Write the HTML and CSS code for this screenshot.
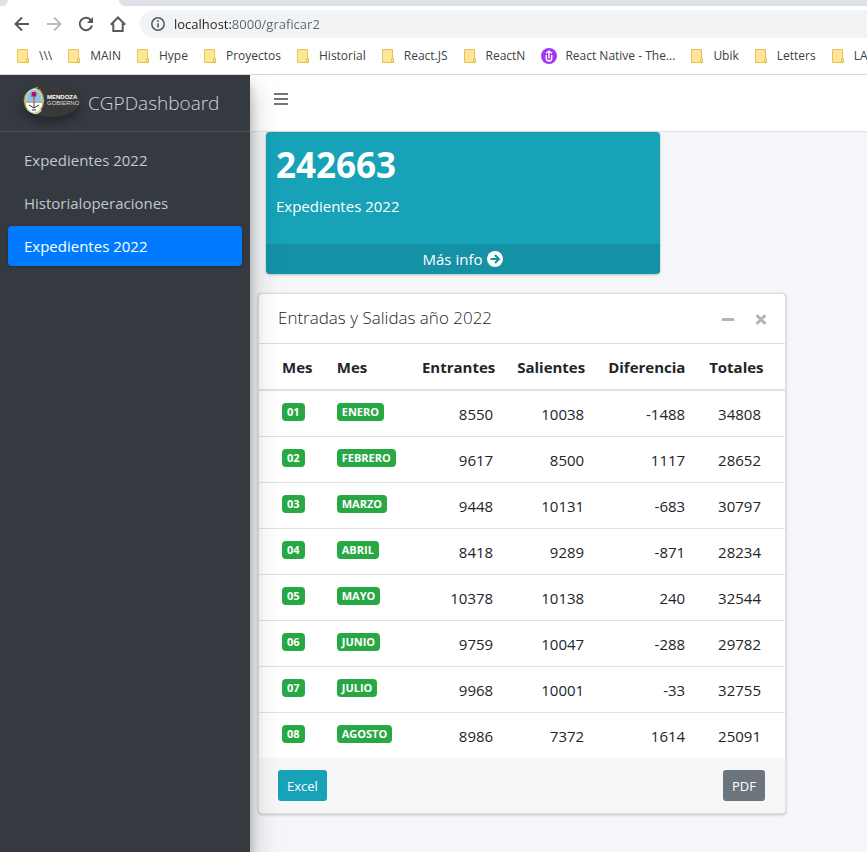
FILE: index.html
```html
<!DOCTYPE html>
<html lang="es">
<head>
<meta charset="utf-8">
<meta name="viewport" content="width=device-width, initial-scale=1">
<title>CGPDashboard</title>
<link rel="stylesheet" href="styles.css">
</head>
<body>
<svg class="defs" aria-hidden="true">
  <symbol id="folder" viewBox="0 0 12 14">
    <path d="M.5.5h10v8.8h1v4.2H.5z" fill="#ffe694" stroke="#e3c15a"/>
    <path d="M9.500 13V10.200q0-1 1-1t1 1V13z" fill="#ffe694" stroke="#dfb94c" stroke-width=".8"/>
  </symbol>
</svg>
<header class="browser">
  <div class="tabstrip"><span class="tab-left"></span><span class="tab-active"></span><span class="tab-right"></span></div>
  <div class="toolbar">
    <button class="tool" aria-label="Atrás"><svg width="16" height="16" viewBox="0 0 16 16" fill="none" stroke="#55595e" stroke-width="2"><path d="M15 8H2M8 1.500 1.500 8 8 14.500"/></svg></button>
    <button class="tool" aria-label="Adelante"><svg width="16" height="16" viewBox="0 0 16 16" fill="none" stroke="#babcbe" stroke-width="2"><path d="M1 8h13M8 1.500 14.500 8 8 14.500"/></svg></button>
    <button class="tool" aria-label="Recargar"><svg width="16" height="16" viewBox="0 0 16 16"><path d="M13 4.300A6.200 6.200 0 1 0 14 9.500" fill="none" stroke="#55595e" stroke-width="2"/><path d="M15 1v6H9z" fill="#55595e"/></svg></button>
    <button class="tool" aria-label="Inicio"><svg width="16" height="16" viewBox="0 0 16 16" fill="none" stroke="#55595e" stroke-width="2"><path d="M.8 8.700 8 1.500l7.200 7.200M3.300 7.500V15h9.400V7.500"/></svg></button>
    <div class="address">
      <svg width="14" height="14" viewBox="0 0 14 14"><circle cx="7" cy="7" r="6.200" fill="none" stroke="#55595e" stroke-width="1.500"/><path d="M6.200 6.200h1.600v4.300H6.200zM6.200 3.300h1.600v1.600H6.200z" fill="#55595e"/></svg>
      <input class="url" type="text" aria-label="Dirección" value="localhost:8000/graficar2">
    </div>
  </div>
  <nav class="bookmarks" aria-label="Marcadores">
    <a href="#"><svg class="folder"><use href="#folder"/></svg>\\\</a>
    <a href="#"><svg class="folder"><use href="#folder"/></svg>MAIN</a>
    <a href="#"><svg class="folder"><use href="#folder"/></svg>Hype</a>
    <a href="#"><svg class="folder"><use href="#folder"/></svg>Proyectos</a>
    <a href="#"><svg class="folder"><use href="#folder"/></svg>Historial</a>
    <a href="#"><svg class="folder"><use href="#folder"/></svg>React.JS</a>
    <a href="#"><svg class="folder"><use href="#folder"/></svg>ReactN</a>
    <a href="#" class="site"><svg width="16" height="16" viewBox="0 0 16 16"><circle cx="8" cy="8" r="8" fill="#a435f0"/><path d="M5.300 7v3.300a2.700 2.700 0 0 0 5.400 0V7M8 3.500v7M5 5.200 8 3l3 2.200" fill="none" stroke="#fff" stroke-width="1.400"/></svg>React Native - The...</a>
    <a href="#"><svg class="folder"><use href="#folder"/></svg>Ubik</a>
    <a href="#"><svg class="folder"><use href="#folder"/></svg>Letters</a>
    <a href="#"><svg class="folder"><use href="#folder"/></svg>LA</a>
  </nav>
</header>
<div class="app">
  <aside class="sidebar">
    <a class="brand" href="#">
      <svg class="logo" viewBox="0 0 58 32" role="img" aria-label="Mendoza Gobierno">
        <ellipse cx="29" cy="16" rx="29" ry="16" fill="#393939"/>
        <path d="M7 4.500Q-1 15 6 24.500M17 4.500Q25 15 18 24.500" fill="none" stroke="#8fa04d" stroke-width="2"/>
        <ellipse cx="12" cy="16" rx="9" ry="12.500" fill="#fff" stroke="#c0b75d" stroke-width="1.200"/>
        <path d="M4 16a8 11.500 0 0 1 16 0z" fill="#8fc1ea"/>
        <path d="M4 17h16" stroke="#576553" stroke-width="1"/>
        <path d="M12 9v14" stroke="#9a5a4a" stroke-width="1.200"/>
        <path d="M9.500 8q2.500-2.500 5 0l-.5 4-2-1-2.500 1z" fill="#b31255"/>
        <path d="m7 20 5 3 5-3M10 25h4" fill="none" stroke="#343434" stroke-width="1"/>
        <path d="M8.500 3.500V1.500l2 1L12 .5l1.500 2 2-1v2z" fill="#e8b923"/>
        <path d="M5 25q7 7 14 0" fill="none" stroke="#d0d7a0" stroke-width="2"/>
        <text x="25" y="14" class="logo-bold">MENDOZA</text>
        <text x="25" y="20" class="logo-thin">GOBIERNO</text>
      </svg>
      <span>CGPDashboard</span>
    </a>
    <nav class="menu">
      <a href="#">Expedientes 2022</a>
      <a href="#">Historialoperaciones</a>
      <a href="#" class="active">Expedientes 2022</a>
    </nav>
  </aside>
  <div class="main">
    <div class="navbar">
      <button class="burger" aria-label="Menú"><svg width="14" height="14" viewBox="0 0 14 14" fill="none" stroke="#757575" stroke-width="2"><path d="M0 2h14M0 7h14M0 12h14"/></svg></button>
    </div>
    <main class="content">
      <section class="small-box">
        <div class="inner">
          <h3>242663</h3>
          <p>Expedientes 2022</p>
        </div>
        <a class="more" href="#">Más info <svg width="16" height="16" viewBox="0 0 16 16"><circle cx="8" cy="8" r="8" fill="#fff"/><path d="M3.500 8h8M8 4l4 4-4 4" fill="none" stroke="#1591a5" stroke-width="2"/></svg></a>
      </section>
      <section class="card">
        <header class="card-header">
          <h2>Entradas y Salidas año 2022</h2>
          <div class="card-tools">
            <button aria-label="Minimizar"><svg width="14" height="14" viewBox="0 0 14 14"><path d="M2 7.500h10" stroke="#adb5bd" stroke-width="3" stroke-linecap="round"/></svg></button>
            <button aria-label="Cerrar"><svg width="14" height="14" viewBox="0 0 14 14"><path d="m3.500 4 7 7m0-7-7 7" stroke="#adb5bd" stroke-width="3" stroke-linecap="round"/></svg></button>
          </div>
        </header>
        <table>
          <colgroup><col class="c1"><col class="c2"><col class="c3"><col class="c4"><col class="c5"><col class="c6"></colgroup>
          <thead><tr><th>Mes</th><th>Mes</th><th>Entrantes</th><th>Salientes</th><th>Diferencia</th><th>Totales</th></tr></thead>
          <tbody>
            <tr><td><span class="badge">01</span></td><td><span class="badge">ENERO</span></td><td>8550</td><td>10038</td><td>-1488</td><td>34808</td></tr>
            <tr><td><span class="badge">02</span></td><td><span class="badge">FEBRERO</span></td><td>9617</td><td>8500</td><td>1117</td><td>28652</td></tr>
            <tr><td><span class="badge">03</span></td><td><span class="badge">MARZO</span></td><td>9448</td><td>10131</td><td>-683</td><td>30797</td></tr>
            <tr><td><span class="badge">04</span></td><td><span class="badge">ABRIL</span></td><td>8418</td><td>9289</td><td>-871</td><td>28234</td></tr>
            <tr><td><span class="badge">05</span></td><td><span class="badge">MAYO</span></td><td>10378</td><td>10138</td><td>240</td><td>32544</td></tr>
            <tr><td><span class="badge">06</span></td><td><span class="badge">JUNIO</span></td><td>9759</td><td>10047</td><td>-288</td><td>29782</td></tr>
            <tr><td><span class="badge">07</span></td><td><span class="badge">JULIO</span></td><td>9968</td><td>10001</td><td>-33</td><td>32755</td></tr>
            <tr><td><span class="badge">08</span></td><td><span class="badge">AGOSTO</span></td><td>8986</td><td>7372</td><td>1614</td><td>25091</td></tr>
          </tbody>
        </table>
        <footer class="card-footer">
          <button class="btn info">Excel</button>
          <button class="btn secondary">PDF</button>
        </footer>
      </section>
    </main>
  </div>
</div>
</body>
</html>
```
FILE: styles.css
```css
* { box-sizing: border-box; }
body {
  margin: 0;
  min-height: 100vh;
  display: flex;
  flex-direction: column;
  overflow-x: hidden;
  font: 15px/24px "Open Sans", "Noto Sans", sans-serif;
  color: #212529;
  background: #f4f6f9;
}
a { color: inherit; text-decoration: none; }
button { border: 0; padding: 0; background: none; font: inherit; color: inherit; }
svg { flex: none; display: block; }
h2, h3, p { margin: 0; }
.defs { position: absolute; width: 0; height: 0; }

.browser { background: #fff; border-bottom: 1px solid #d5d7da; overflow: hidden; }
.tabstrip { display: flex; height: 6px; background: #fff; }
.tab-left { width: 8px; background: #dee1e6; border-bottom-right-radius: 6px; }
.tab-active { width: 111px; }
.tab-right { flex: 1; background: #dee1e6; border-bottom-left-radius: 6px; }
.toolbar { display: flex; align-items: center; gap: 16px; height: 36px; padding-left: 14px; }
.tool { width: 16px; height: 16px; }
.address {
  flex: 1;
  display: flex;
  align-items: center;
  gap: 9px;
  height: 28px;
  margin-left: -2px;
  padding-left: 11px;
  background: #f1f3f4;
  border-radius: 14px 0 0 14px;
}
.url {
  flex: 1;
  min-width: 0;
  border: 0;
  padding: 0;
  font: 13px/20px "Open Sans", "Noto Sans", sans-serif;
  background: linear-gradient(to right, #202124 57px, #5f6368 57px);
  -webkit-background-clip: text;
  background-clip: text;
  color: transparent;
}
.bookmarks { display: flex; gap: 16px; height: 32px; padding: 0 0 4px 17px; font-size: 12px; line-height: 16px; color: #3c4043; white-space: nowrap; }
.bookmarks a { display: flex; align-items: center; gap: 10px; }
.bookmarks .site { gap: 8px; }
.folder { width: 12px; height: 14px; }

.app { flex: 1; display: flex; }
.sidebar {
  position: relative;
  z-index: 1;
  flex: none;
  width: 250px;
  background: #343a40;
  color: #c2c7d0;
  box-shadow: 0 14px 28px rgba(0, 0, 0, .25), 0 10px 10px rgba(0, 0, 0, .22);
  clip-path: inset(0 -60px 0 0);
}
.brand { display: flex; align-items: center; gap: 8px; height: 57px; padding-left: 22px; border-bottom: 1px solid #4b545c; font-size: 19px; font-weight: 300; color: #d0d4db; }
.logo { width: 58px; height: 32px; margin-bottom: 4px; border-radius: 50%; box-shadow: 0 6px 10px rgba(0, 0, 0, .3); }
.logo text { font-family: "Liberation Sans", sans-serif; fill: #fff; }
.logo .logo-bold { font-size: 6px; font-weight: 700; }
.logo .logo-thin { font-size: 6px; fill: #ddd; }
.menu { display: flex; flex-direction: column; gap: 3px; padding: 8px; }
.menu a { height: 40px; padding: 8px 16px; border-radius: 4px; }
.menu .active { background: #007bff; color: #fff; box-shadow: 0 1px 3px rgba(0, 0, 0, .25); }

.main { flex: 1; min-width: 0; }
.navbar { display: flex; align-items: center; height: 57px; padding: 0 24px 8px; background: #fff; border-bottom: 1px solid #dee2e6; }
.content { padding: 0 81px 38px 8px; }
.small-box {
  width: calc(75% - 2px);
  margin: 0 0 19px 8px;
  border-radius: 4px;
  overflow: hidden;
  color: #fff;
  background: #17a2b8;
  box-shadow: 0 0 1px rgba(0, 0, 0, .13), 0 1px 3px rgba(0, 0, 0, .2);
}
.inner { height: 112px; padding: 10px; }
.inner h3 { margin-bottom: 6px; font-size: 35px; line-height: 46px; font-weight: 700; }
.more { display: flex; justify-content: center; align-items: center; gap: 5px; height: 30px; background: rgba(0, 0, 0, .1); }

.card { background: #fff; border: 1px solid #dfdfdf; border-radius: 4px; box-shadow: 0 0 1px rgba(0, 0, 0, .13), 0 1px 3px rgba(0, 0, 0, .2); overflow: hidden; }
.card-header { display: flex; justify-content: space-between; align-items: center; height: 50px; padding: 0 17px 0 19px; border-bottom: 1px solid #dfdfdf; }
.card-header h2 { padding-bottom: 2px; font-size: 17px; line-height: 24px; font-weight: 350; }
.card-tools { display: flex; gap: 19px; }
.card-tools button { width: 14px; height: 14px; }
table { width: 100%; table-layout: fixed; border-collapse: separate; border-spacing: 0; }
.c1 { width: 12.5%; } .c2 { width: 16.2%; } .c3 { width: 18.1%; }
.c4 { width: 17.3%; } .c5 { width: 19.2%; } .c6 { width: 16.7%; }
th, td { height: 46px; padding: 0 12px; text-align: right; }
th { height: 47px; border-bottom: 2px solid #dee2e6; font-weight: 700; }
td { padding-top: 1px; border-bottom: 1px solid #dee2e6; }
tr:last-child td { height: 45px; border-bottom: 0; }
th:nth-child(-n+2), td:nth-child(-n+2) { text-align: left; }
td:nth-child(-n+2) { padding-top: 0; padding-bottom: 3px; }
th:first-child, td:first-child { padding-left: 23px; }
th:last-child, td:last-child { padding-right: 24px; }
.badge { display: block; width: fit-content; padding: 3px 5px; border-radius: 4px; background: #28a745; color: #fff; font-size: 11px; line-height: 12px; font-weight: 700; }
.card-footer { display: flex; justify-content: space-between; align-items: center; height: 55px; padding: 0 20px 0 19px; background: #f7f7f7; }
.btn { height: 31px; padding: 0 9px; border-radius: 3px; font-size: 13px; line-height: 20px; color: #fff; }
.info { background: #17a2b8; }
.secondary { background: #6c757d; }
```
